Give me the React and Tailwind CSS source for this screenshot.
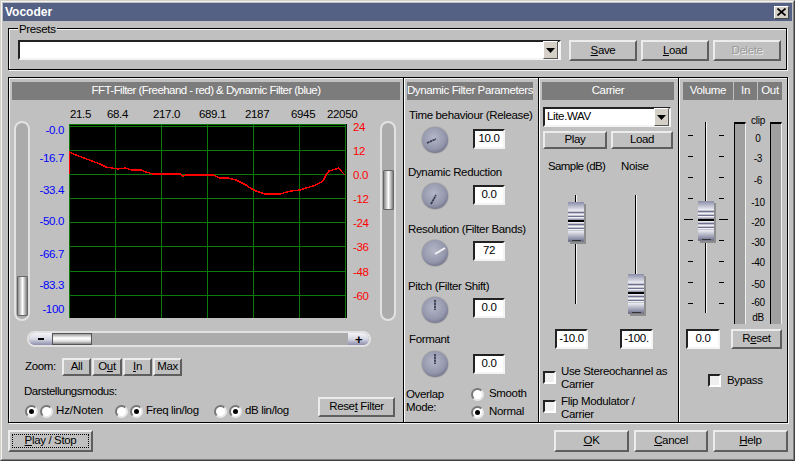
import React from "react";

const raised = "border-2 border-t-[#ececec] border-l-[#ececec] border-r-[#5e5e5e] border-b-[#5e5e5e] bg-[#c0c0c0]";
const sunken = "border-t-2 border-l-2 border-r-2 border-b-2 border-t-[#222] border-l-[#222] border-r-[#f4f4f4] border-b-[#f4f4f4] bg-white";

function Btn({ className = "", children, disabled }) {
  return (
    <div className={`${raised} flex items-center justify-center leading-none ${disabled ? "text-[#9a9a9a] [text-shadow:1px_1px_0_#ececec]" : ""} ${className}`}>
      {children}
    </div>
  );
}

function Edit({ className = "", children }) {
  return <div className={`${sunken} flex items-center justify-center leading-none ${className}`}>{children}</div>;
}

function Header({ className = "", children }) {
  return <div className={`bg-[#7c7c7c] text-white h-[18px] flex items-center justify-center whitespace-nowrap ${className}`}>{children}</div>;
}

function Arrow() {
  return (
    <div className="w-[15px] h-[18px] bg-[#d4d0c8] border border-t-white border-l-white border-r-[#555] border-b-[#555] flex items-center justify-center shrink-0">
      <svg width="9" height="5" viewBox="0 0 9 5"><path d="M0 0H9L4.5 5Z" fill="#000" /></svg>
    </div>
  );
}

function Radio({ on }) {
  return (
    <div className="w-[13px] h-[13px] rounded-full bg-white border-2 border-t-[#777] border-l-[#777] border-r-[#e8e8e8] border-b-[#e8e8e8] flex items-center justify-center shrink-0">
      {on && <div className="w-[5px] h-[5px] rounded-full bg-black" />}
    </div>
  );
}

function Check({ className = "" }) {
  return <div className={`w-[13px] h-[13px] bg-[#efefef] border-2 border-t-[#222] border-l-[#222] border-r-white border-b-white shrink-0 ${className}`} />;
}

function Knob({ x1, y1, x2, y2, light }) {
  return (
    <svg width="28" height="28" viewBox="0 0 28 28" className="shrink-0">
      <defs>
        <radialGradient id="knobg" cx="45%" cy="40%" r="65%">
          <stop offset="0%" stopColor="#b4b6c6" />
          <stop offset="70%" stopColor="#9496ac" />
          <stop offset="100%" stopColor="#6f7188" />
        </radialGradient>
      </defs>
      <circle cx="14" cy="14" r="13.8" fill="#a8a8a8" />
      <circle cx="14" cy="14" r="13" fill="url(#knobg)" />
      <line x1={x1} y1={y1} x2={x2} y2={y2} stroke={light ? "#f4f4f8" : "#33354a"} strokeWidth={light ? 2 : 1.7} strokeDasharray={light ? undefined : "2.5 0.5"} />
    </svg>
  );
}

function Fader({ className = "" }) {
  const stripes = [
    [10, "#6f7290"], [12, "#f0f0f6"], [14, "#6f7290"], [15, "#f0f0f6"],
    [17, "#9a9cb0"], [18, "#000"], [19, "#000"], [20, "#e8e8f0"], [22, "#6f7290"], [24, "#f0f0f6"], [26, "#6f7290"], [27, "#f0f0f6"],
  ];
  return (
    <svg width="18" height="42" viewBox="0 0 18 42" className={className}>
      <defs>
        <linearGradient id="capt" x1="0" y1="0" x2="0" y2="1">
          <stop offset="0%" stopColor="#8a8da8" />
          <stop offset="100%" stopColor="#eeeef4" />
        </linearGradient>
        <linearGradient id="capb" x1="0" y1="0" x2="0" y2="1">
          <stop offset="0%" stopColor="#eeeef4" />
          <stop offset="100%" stopColor="#7f829c" />
        </linearGradient>
      </defs>
      <rect x="2" y="2" width="16" height="40" fill="#8e8e8e" />
      <rect x="0" y="0" width="16" height="40" fill="#c4c4d0" />
      <rect x="0" y="0" width="16" height="9" fill="url(#capt)" />
      {stripes.map(([y, c]) => <rect key={y} x="0" y={y} width="16" height="1" fill={c} />)}
      <rect x="0" y="29" width="16" height="9" fill="url(#capb)" />
      <rect x="0" y="38" width="16" height="2" fill="#55586e" opacity="0.7" />
      <rect x="4" y="38" width="9" height="1" fill="#333" />
    </svg>
  );
}

function VThumb({ className = "" }) {
  return <div className={`w-[11px] h-[40px] border border-[#666] rounded-[1px] bg-[linear-gradient(90deg,#8c8c8c,#ffffff_50%,#7c7c7c)] ${className}`} />;
}

function Trough({ children, className = "" }) {
  return (
    <div className={`w-[16px] h-[200px] rounded-t-full rounded-b-full border-2 border-[#e2e2e2] bg-[#ababab] relative shrink-0 ${className}`}>
      {children}
    </div>
  );
}

const curve = [
  [69, 174], [69, 152], [76, 155], [84, 158], [92, 161], [100, 164], [106, 167], [112, 168], [118, 169], [125, 168], [132, 170], [141, 170], [146, 172], [153, 174],
  [180, 174], [183, 176], [186, 175], [213, 175], [220, 178], [228, 178], [236, 180], [240, 182], [246, 185], [250, 188], [256, 191], [265, 194], [280, 194],
  [291, 191], [300, 190], [306, 188], [313, 186], [320, 183], [323, 181], [326, 175], [329, 171], [336, 169], [339, 168], [342, 172], [345, 175],
];

function Chart() {
  const hs = [124, 126, 150, 174, 198, 222, 246, 271, 295];
  const vs = [69, 115, 161, 207, 253, 299, 345];
  return (
    <svg width="278" height="194" viewBox="69 124 278 194" className="bg-black mt-[3px] shrink-0" shapeRendering="crispEdges">
      {hs.map((y) => <line key={y} x1="69" x2="346" y1={y + 0.5} y2={y + 0.5} stroke="#0b7a0b" />)}
      {vs.map((x) => <line key={x} x1={x + 0.5} x2={x + 0.5} y1="124" y2="318" stroke="#0b7a0b" />)}
      <polyline points={curve.map((p) => p.join(",")).join(" ")} fill="none" stroke="#ff0000" strokeWidth="1.4" />
    </svg>
  );
}

function ParamLabel({ className = "", children }) {
  return <div className={`h-[14px] leading-[14px] whitespace-nowrap ${className}`}>{children}</div>;
}

function LeftPanel() {
  return (
    <div className="w-[395px] shrink-0 border-r border-black shadow-[1px_0_0_#fff] flex flex-col">
      <Header className="ml-[3px] mt-[4px] w-[388px] tracking-[-0.55px]">FFT-Filter (Freehand - red) &amp; Dynamic Filter (blue)</Header>
      <div className="h-[21px] pl-[61px] flex items-end">
        <span className="w-[37px] leading-[14px]">21.5</span>
        <span className="w-[46px] leading-[14px]">68.4</span>
        <span className="w-[46px] leading-[14px]">217.0</span>
        <span className="w-[46px] leading-[14px]">689.1</span>
        <span className="w-[46px] leading-[14px]">2187</span>
        <span className="w-[36px] leading-[14px]">6945</span>
        <span className="leading-[14px]">22050</span>
      </div>
      <div className="flex h-[200px] ml-[5px]">
        <Trough><VThumb className="absolute left-[1px] bottom-[3px]" /></Trough>
        <div className="w-[35px] pr-[1px] flex flex-col items-end text-[#0000ff] leading-[14px] shrink-0">
          <span className="mt-[2px]">-0.0</span>
          <span className="mt-[14px]">-16.7</span>
          <span className="mt-[18px]">-33.4</span>
          <span className="mt-[17px]">-50.0</span>
          <span className="mt-[19px]">-66.7</span>
          <span className="mt-[17px]">-83.3</span>
          <span className="mt-[10px]">-100</span>
        </div>
        <div className="w-[4px] shrink-0" />
        <Chart />
        <div className="w-[33px] pl-[6px] flex flex-col items-start text-[#ff0000] leading-[14px] shrink-0">
          <span className="-mt-[1px]">24</span>
          <span className="mt-[10px]">12</span>
          <span className="mt-[10px]">0.0</span>
          <span className="mt-[10px]">-12</span>
          <span className="mt-[10px]">-24</span>
          <span className="mt-[10px]">-36</span>
          <span className="mt-[11px]">-48</span>
          <span className="mt-[10px]">-60</span>
        </div>
        <Trough><VThumb className="absolute left-[1px] top-[47px]" /></Trough>
      </div>
      <div className="mt-[10px] ml-[18px] w-[344px] h-[16px] rounded-full border-2 border-[#e2e2e2] bg-[#ababab] flex items-stretch overflow-hidden shrink-0">
        <div className="w-[23px] bg-[linear-gradient(180deg,#f4f4f8,#d8d8e4_50%,#8c8eac)] flex items-center justify-center">
          <div className="w-[6px] h-[2px] bg-black" />
        </div>
        <div className="w-[40px] border border-[#555] bg-[linear-gradient(180deg,#9a9a9a,#ffffff_40%,#e4e4e4_70%,#8a8a8a)]" />
        <div className="flex-1" />
        <div className="w-[21px] bg-[linear-gradient(180deg,#f4f4f8,#d8d8e4_50%,#8c8eac)] flex items-center justify-center text-[13px] leading-none font-bold">+</div>
      </div>
      <div className="mt-[11px] ml-[16px] flex items-center h-[18px]">
        <span className="w-[37px]">Zoom:</span>
        <div className="flex gap-[1px]">
          <Btn className="w-[29px] h-[18px]">All</Btn>
          <Btn className="w-[30px] h-[18px]"><span>O<u>u</u>t</span></Btn>
          <Btn className="w-[29px] h-[18px]"><span><u>I</u>n</span></Btn>
          <Btn className="w-[29px] h-[18px]">Max</Btn>
        </div>
      </div>
      <div className="mt-[8px] ml-[15px] flex">
        <div className="w-[294px] shrink-0">
          <div className="h-[14px] leading-[14px] tracking-[-0.5px]">Darstellungsmodus:</div>
          <div className="mt-[6px] ml-[1px] flex items-center h-[14px]">
            <div className="w-[90px] flex items-center gap-[2px]"><Radio on /><Radio /><span className="ml-[1px] tracking-[-0.1px]">Hz/Noten</span></div>
            <div className="w-[99px] flex items-center gap-[2px]"><Radio /><Radio on /><span className="ml-[1px]">Freq lin/log</span></div>
            <div className="flex items-center gap-[2px]"><Radio /><Radio on /><span className="ml-[1px] whitespace-nowrap">dB lin/log</span></div>
          </div>
        </div>
        <Btn className="w-[77px] h-[20px] mt-[13px]"><span>Rese<u>t</u> Filter</span></Btn>
      </div>
    </div>
  );
}

function MidPanel() {
  return (
    <div className="w-[135px] shrink-0 border-r border-black shadow-[1px_0_0_#fff] flex flex-col">
      <Header className="ml-[3px] mt-[4px] w-[126px] tracking-[-0.4px]">Dynamic Filter Parameters</Header>
      <ParamLabel className="mt-[8px] pl-[5px]">Time behaviour (Release)</ParamLabel>
      <div className="mt-[4px] pl-[17px] flex items-center h-[28px]">
        <Knob x1="6" y1="17" x2="15" y2="13" />
        <Edit className="ml-[24px] w-[32px] h-[20px] -mt-[2px]">10.0</Edit>
      </div>
      <ParamLabel className="mt-[11px] pl-[4px]">Dynamic Reduction</ParamLabel>
      <div className="mt-[3px] pl-[17px] flex items-center h-[28px]">
        <Knob x1="10" y1="22" x2="15" y2="13" />
        <Edit className="ml-[24px] w-[32px] h-[20px] -mt-[2px]">0.0</Edit>
      </div>
      <ParamLabel className="mt-[12px] pl-[4px]">Resolution (Filter Bands)</ParamLabel>
      <div className="mt-[3px] pl-[17px] flex items-center h-[28px]">
        <Knob x1="14" y1="15" x2="24" y2="9" light />
        <Edit className="ml-[24px] w-[32px] h-[20px] -mt-[4px]">72</Edit>
      </div>
      <ParamLabel className="mt-[12px] pl-[4px]">Pitch (Filter Shift)</ParamLabel>
      <div className="mt-[3px] pl-[17px] flex items-center h-[28px]">
        <Knob x1="14" y1="4" x2="14" y2="14" />
        <Edit className="ml-[24px] w-[32px] h-[20px] -mt-[4px]">0.0</Edit>
      </div>
      <ParamLabel className="mt-[8px] pl-[5px]">Formant</ParamLabel>
      <div className="mt-[4px] pl-[17px] flex items-center h-[28px]">
        <Knob x1="14" y1="4" x2="14" y2="14" />
        <Edit className="ml-[24px] w-[32px] h-[20px]">0.0</Edit>
      </div>
      <div className="mt-[7px] pl-[2px] flex">
        <div className="w-[65px] mt-[3px] leading-[13px] shrink-0">Overlap<br />Mode:</div>
        <div className="flex flex-col">
          <div className="h-[18px] flex items-center gap-[5px]"><Radio /><span>Smooth</span></div>
          <div className="h-[18px] flex items-center gap-[5px]"><Radio on /><span>Normal</span></div>
        </div>
      </div>
    </div>
  );
}

function Track({ className = "" }) {
  return <div className={`w-[2px] border-l border-l-black border-r border-r-[#f4f4f4] ${className}`} />;
}

function CarrierPanel() {
  return (
    <div className="w-[140px] shrink-0 border-r border-black shadow-[1px_0_0_#fff] flex flex-col">
      <Header className="ml-[3px] mt-[4px] w-[132px]">Carrier</Header>
      <div className={`${sunken} ml-[4px] mt-[7px] w-[128px] h-[20px] flex items-center justify-between leading-none`}>
        <span className="pl-[2px]">Lite.WAV</span>
        <Arrow />
      </div>
      <div className="ml-[4px] mt-[4px] flex gap-[4px]">
        <Btn className="w-[64px] h-[18px]">Play</Btn>
        <Btn className="w-[62px] h-[18px]">Load</Btn>
      </div>
      <div className="ml-[9px] mt-[10px] flex h-[14px] leading-[14px]">
        <span className="w-[73px] whitespace-nowrap tracking-[-0.6px]">Sample (dB)</span>
        <span>Noise</span>
      </div>
      <div className="ml-[29px] mt-[22px] flex gap-[44px] h-[120px]">
        <div className="relative w-[16px] flex justify-center">
          <Track className="h-[109px]" />
          <Fader className="absolute left-0 top-[7px]" />
        </div>
        <div className="relative w-[16px] flex justify-center">
          <Track className="h-[109px]" />
          <Fader className="absolute left-0 top-[79px]" />
        </div>
      </div>
      <div className="ml-[16px] mt-[14px] flex gap-[32px]">
        <Edit className="w-[33px] h-[20px]">-10.0</Edit>
        <Edit className="w-[33px] h-[20px]">-100.</Edit>
      </div>
      <div className="ml-[4px] mt-[16px] flex gap-[5px] leading-[13px]">
        <Check className="mt-[6px]" />
        <span className="whitespace-nowrap">Use Stereochannel as<br />Carrier</span>
      </div>
      <div className="ml-[4px] mt-[4px] flex gap-[5px] leading-[13px]">
        <Check className="mt-[5px]" />
        <span className="whitespace-nowrap">Flip Modulator /<br />Carrier</span>
      </div>
    </div>
  );
}

function Tick({ long }) {
  return <div className={`h-[1px] bg-black shrink-0 ${long ? "w-[9px]" : "w-[5px]"}`} />;
}

function Ticks({ className = "" }) {
  return (
    <div className={`flex flex-col gap-[20px] pt-[14px] w-[9px] ${className}`}>
      <Tick /><Tick /><Tick /><Tick /><Tick long /><Tick /><Tick /><Tick /><Tick />
    </div>
  );
}

function Meter() {
  return <div className="mt-[1px] w-[12px] h-[202px] bg-[#a0a0a0] border-t-2 border-t-black border-l border-l-black border-r border-r-[#f0f0f0] shrink-0" />;
}

function VolumePanel() {
  return (
    <div className="flex-1 flex flex-col">
      <div className="ml-[4px] mt-[4px] flex gap-[1px]">
        <Header className="w-[50px]">Volume</Header>
        <Header className="w-[23px]">In</Header>
        <Header className="w-[24px]">Out</Header>
      </div>
      <div className="mt-[21px] ml-[5px] flex h-[203px]">
        <div className="relative w-[43px] flex shrink-0">
          <Ticks className="items-end" />
          <Track className="ml-[12px] mt-[1px] h-[191px]" />
          <Ticks className="ml-[12px] items-start" />
          <Fader className="absolute left-[14px] top-[80px]" />
        </div>
        <div className="ml-[7px] flex">
          <Meter />
          <div className="w-[24px] flex flex-col items-center text-[10px] tracking-[-0.3px] leading-[12px] shrink-0">
            <span className="-mt-[6px]">clip</span>
            <span className="mt-[6px]">0</span>
            <span className="mt-[8px]">-3</span>
            <span className="mt-[10px]">-6</span>
            <span className="mt-[10px]">-10</span>
            <span className="mt-[8px]">-20</span>
            <span className="mt-[8px]">-30</span>
            <span className="mt-[8px]">-40</span>
            <span className="mt-[10px]">-50</span>
            <span className="mt-[6px]">-60</span>
            <span className="mt-[3px]">dB</span>
          </div>
          <Meter />
        </div>
      </div>
      <div className="mt-[5px] ml-[7px] flex gap-[11px]">
        <Edit className="w-[34px] h-[20px]">0.0</Edit>
        <Btn className="w-[51px] h-[20px]"><span>R<u>e</u>set</span></Btn>
      </div>
      <div className="mt-[23px] ml-[29px] flex items-center gap-[6px]">
        <Check />
        <span>Bypass</span>
      </div>
    </div>
  );
}

export default function App() {
  return (
    <div className="w-[795px] h-[461px] bg-[#c0c0c0] text-black text-[11.5px] tracking-[-0.35px] font-['Liberation_Sans',Arial,sans-serif] border border-t-[#d4d0c8] border-l-[#d4d0c8] border-r-[#404040] border-b-[#404040] overflow-hidden">
      <div className="w-full h-full border border-t-[#f4f4f4] border-l-[#f4f4f4] border-r-[#808080] border-b-[#808080] p-[1px] flex flex-col">
        <div className="h-[18px] bg-[#556085] flex items-center justify-between pl-[2px] pr-[3px] text-white font-bold text-[12px] tracking-normal shrink-0">
          <span>Vocoder</span>
          <div className="w-[15px] h-[13px] bg-[#d4d0c8] border border-t-white border-l-white border-r-[#444] border-b-[#444] flex items-center justify-center">
            <svg width="9" height="8" viewBox="0 0 9 8"><path d="M0.5 0.5L8.5 7.5M8.5 0.5L0.5 7.5" stroke="#000" strokeWidth="1.7" fill="none" /></svg>
          </div>
        </div>

        <div className="relative ml-[5px] mt-[7px] w-[779px] h-[42px] border border-black shadow-[1px_1px_0_#f4f4f4,inset_1px_1px_0_#f4f4f4] flex items-start pl-[9px] pt-[11px] shrink-0">
          <span className="absolute left-[9px] -top-[7px] bg-[#c0c0c0] px-[1px] leading-[14px]">Presets</span>
          <div className={`${sunken} w-[543px] h-[20px] flex items-center justify-end pr-[1px]`}>
            <Arrow />
          </div>
          <div className="ml-[8px] flex gap-[4px]">
            <Btn className="w-[68px] h-[21px]"><span><u>S</u>ave</span></Btn>
            <Btn className="w-[68px] h-[21px]"><span><u>L</u>oad</span></Btn>
            <Btn disabled className="w-[68px] h-[21px]">Delete</Btn>
          </div>
        </div>

        <div className="ml-[5px] mt-[7px] w-[780px] h-[346px] border border-black shadow-[1px_1px_0_#f4f4f4,inset_1px_1px_0_#f4f4f4] flex shrink-0">
          <LeftPanel />
          <MidPanel />
          <CarrierPanel />
          <VolumePanel />
        </div>

        <div className="ml-[5px] mt-[7px] w-[780px] flex">
          <Btn className="w-[85px] h-[22px] p-[2px]">
            <div className="w-full h-full border border-dotted border-black flex items-center justify-center"><span><u>P</u>lay / Stop</span></div>
          </Btn>
          <div className="ml-auto flex gap-[5px]">
            <Btn className="w-[75px] h-[22px]"><span><u>O</u>K</span></Btn>
            <Btn className="w-[74px] h-[22px]"><span><u>C</u>ancel</span></Btn>
            <Btn className="w-[75px] h-[22px]"><span><u>H</u>elp</span></Btn>
          </div>
        </div>
      </div>
    </div>
  );
}
